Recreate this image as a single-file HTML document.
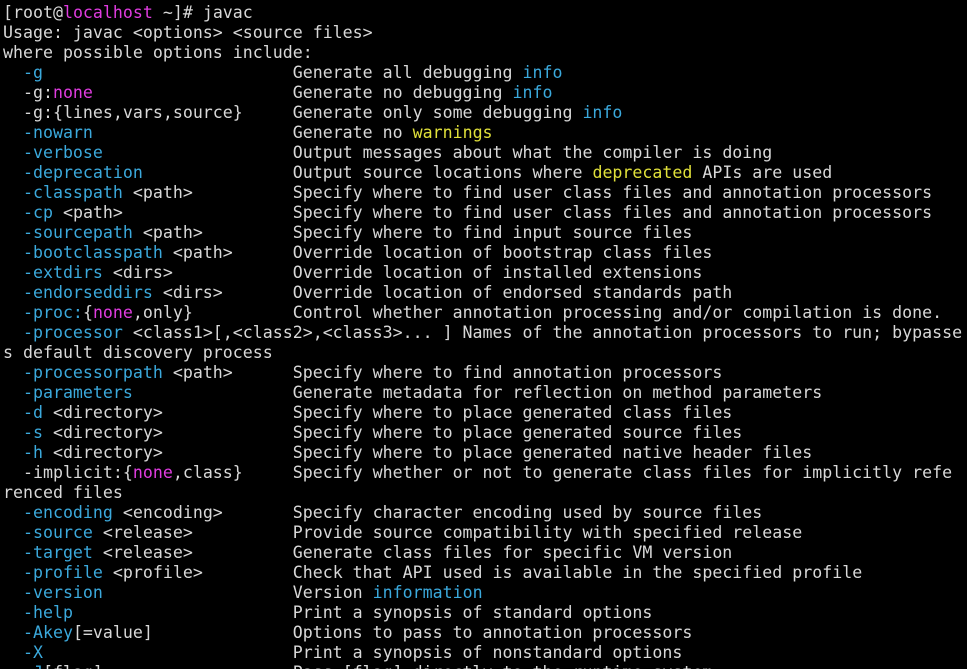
<!DOCTYPE html>
<html><head><meta charset="utf-8"><style>
html,body{margin:0;padding:0;background:#000;width:967px;height:669px;overflow:hidden}
pre{margin:0;padding:3px 0 0 3px;font-family:"DejaVu Sans Mono","Liberation Mono",monospace;font-size:16.6px;line-height:20px;color:#d8d8d8}
.c{color:#3ba9dc}.m{color:#e03ce0}.y{color:#e0e03a}
</style></head><body><pre>[root@<span class="m">localhost</span> ~]# javac
Usage: javac &lt;options&gt; &lt;source files&gt;
where possible options include:
  <span class="c">-g</span>                         Generate all debugging <span class="c">info</span>
  -g:<span class="m">none</span>                    Generate no debugging <span class="c">info</span>
  -g:{lines,vars,source}     Generate only some debugging <span class="c">info</span>
  <span class="c">-nowarn</span>                    Generate no <span class="y">warnings</span>
  <span class="c">-verbose</span>                   Output messages about what the compiler is doing
  <span class="c">-deprecation</span>               Output source locations where <span class="y">deprecated</span> APIs are used
  <span class="c">-classpath</span> &lt;path&gt;          Specify where to find user class files and annotation processors
  <span class="c">-cp</span> &lt;path&gt;                 Specify where to find user class files and annotation processors
  <span class="c">-sourcepath</span> &lt;path&gt;         Specify where to find input source files
  <span class="c">-bootclasspath</span> &lt;path&gt;      Override location of bootstrap class files
  <span class="c">-extdirs</span> &lt;dirs&gt;            Override location of installed extensions
  <span class="c">-endorseddirs</span> &lt;dirs&gt;       Override location of endorsed standards path
  <span class="c">-proc:</span>{<span class="m">none</span>,only}          Control whether annotation processing and/or compilation is done.
  <span class="c">-processor</span> &lt;class1&gt;[,&lt;class2&gt;,&lt;class3&gt;... ] Names of the annotation processors to run; bypasse
s default discovery process
  <span class="c">-processorpath</span> &lt;path&gt;      Specify where to find annotation processors
  <span class="c">-parameters</span>                Generate metadata for reflection on method parameters
  <span class="c">-d</span> &lt;directory&gt;             Specify where to place generated class files
  <span class="c">-s</span> &lt;directory&gt;             Specify where to place generated source files
  <span class="c">-h</span> &lt;directory&gt;             Specify where to place generated native header files
  -implicit:{<span class="m">none</span>,class}     Specify whether or not to generate class files for implicitly refe
renced files
  <span class="c">-encoding</span> &lt;encoding&gt;       Specify character encoding used by source files
  <span class="c">-source</span> &lt;release&gt;          Provide source compatibility with specified release
  <span class="c">-target</span> &lt;release&gt;          Generate class files for specific VM version
  <span class="c">-profile</span> &lt;profile&gt;         Check that API used is available in the specified profile
  <span class="c">-version</span>                   Version <span class="c">information</span>
  <span class="c">-help</span>                      Print a synopsis of standard options
  <span class="c">-Akey</span>[=value]              Options to pass to annotation processors
  <span class="c">-X</span>                         Print a synopsis of nonstandard options
  <span class="c">-J</span>[flag]                   Pass [flag] directly to the runtime system
</pre></body></html>
